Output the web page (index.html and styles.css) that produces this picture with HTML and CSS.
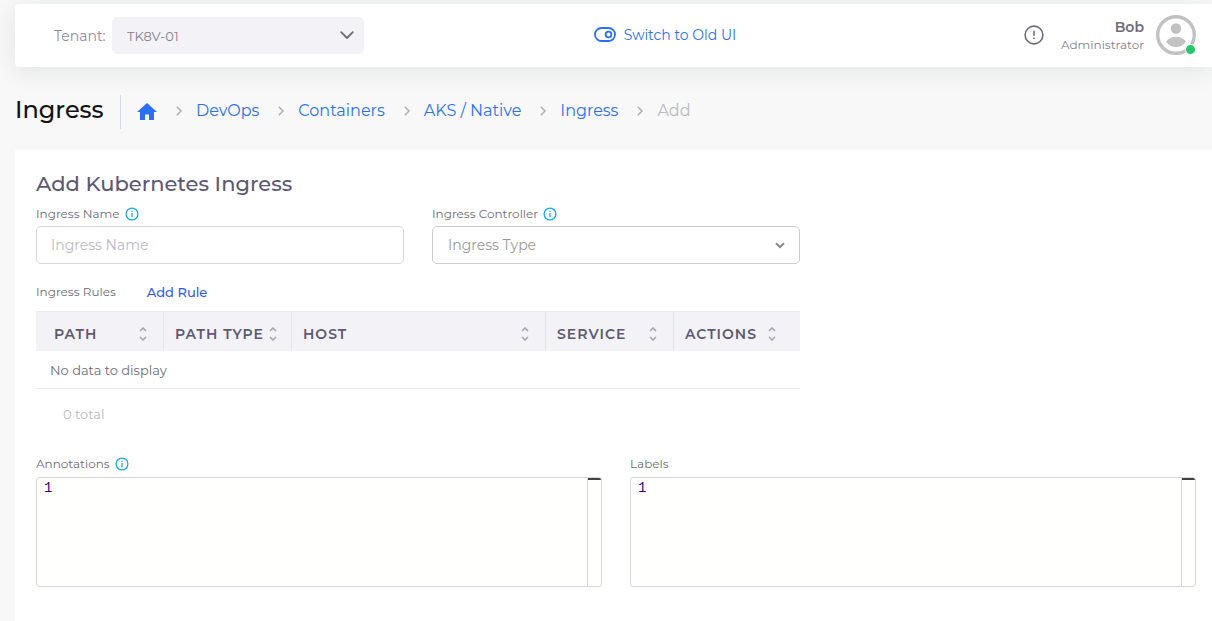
FILE: index.html
```html
<!DOCTYPE html>
<html lang="en">
<head>
<meta charset="utf-8">
<meta name="viewport" content="width=device-width, initial-scale=1">
<title>Add Kubernetes Ingress</title>
<link rel="stylesheet" href="styles.css">
</head>
<body>
<svg class="sprite" aria-hidden="true">
  <symbol id="info" viewBox="0 0 14 14"><circle cx="7" cy="7" r="5.9" fill="none" stroke="currentColor" stroke-width="1.3"/><path d="M7 6v4M7 3.8v1.3" fill="none" stroke="currentColor" stroke-width="1.3"/></symbol>
  <symbol id="sort" viewBox="0 0 8 14"><path d="M1 4l3-3 3 3M1 10l3 3 3-3" fill="none" stroke="currentColor" stroke-width="1.5"/></symbol>
  <symbol id="next" viewBox="0 0 6 10"><path d="M0.800 0.800L5 5 0.800 9.200" fill="none" stroke="currentColor" stroke-width="1.5"/></symbol>
</svg>

<header class="topbar">
  <div class="tenant">
    <label class="tenant-label" for="tenant">Tenant:</label>
    <div class="select-wrap tenant-wrap">
      <select id="tenant" class="tenant-select"><option>TK8V-01</option></select>
      <svg class="select-arrow" width="14" height="9" viewBox="0 0 14 9" aria-hidden="true"><path d="M1.2 1.2L7 7l5.800-5.800" fill="none" stroke="currentColor" stroke-width="1.8" stroke-linecap="round" stroke-linejoin="round"/></svg>
    </div>
  </div>
  <a class="switch" href="#">
    <svg width="22" height="15" viewBox="0 0 22 15" aria-hidden="true"><rect x="1" y="1" width="20" height="13" rx="6.500" fill="none" stroke="currentColor" stroke-width="1.8"/><circle cx="14.500" cy="7.500" r="2.900" fill="none" stroke="currentColor" stroke-width="1.800"/></svg>
    <span>Switch to Old UI</span>
  </a>
  <div class="account">
    <button class="icon-button" type="button" aria-label="Alerts">
      <svg width="20" height="20" viewBox="0 0 20 20" aria-hidden="true"><circle cx="10" cy="10" r="8.900" fill="none" stroke="currentColor" stroke-width="1.600"/><path d="M10 5.800v5M10 12.500v1.600" fill="none" stroke="currentColor" stroke-width="1.600"/></svg>
    </button>
    <div class="user">
      <span class="user-name">Bob</span>
      <span class="user-role">Administrator</span>
    </div>
    <div class="avatar">
      <svg width="40" height="40" viewBox="0 0 40 40" aria-hidden="true"><circle cx="20" cy="20" r="18.300" fill="#fff" stroke="#c1c1c1" stroke-width="3.400"/><circle cx="20" cy="13.500" r="5.200" fill="#c1c1c1"/><path d="M10 26.500Q14 21.800 20 21.800T30 26.500Q26 32.200 20 32.200T10 26.500Z" fill="#c1c1c1"/></svg>
      <span class="status"></span>
    </div>
  </div>
</header>

<div class="page-head">
  <h1 class="page-title">Ingress</h1>
  <nav class="crumbs" aria-label="Breadcrumb">
    <a class="home" href="#" aria-label="Home"><svg width="20" height="17" viewBox="0 0 20 17" aria-hidden="true"><path d="M10 0L0 9h3v8h5v-5.500h4V17h5V9h3z" fill="currentColor"/></svg></a>
    <svg class="sep" aria-hidden="true"><use href="#next"/></svg>
    <a href="#">DevOps</a>
    <svg class="sep" aria-hidden="true"><use href="#next"/></svg>
    <a href="#">Containers</a>
    <svg class="sep" aria-hidden="true"><use href="#next"/></svg>
    <a href="#">AKS / Native</a>
    <svg class="sep" aria-hidden="true"><use href="#next"/></svg>
    <a href="#">Ingress</a>
    <svg class="sep" aria-hidden="true"><use href="#next"/></svg>
    <span class="current">Add</span>
  </nav>
</div>

<main class="card">
  <h2 class="card-title">Add Kubernetes Ingress</h2>
  <form class="form">
    <div class="field">
      <div class="label-row"><label for="name">Ingress Name</label><svg class="info" aria-hidden="true"><use href="#info"/></svg></div>
      <input id="name" class="control" type="text" placeholder="Ingress Name">
    </div>
    <div class="field">
      <div class="label-row"><label for="controller">Ingress Controller</label><svg class="info" aria-hidden="true"><use href="#info"/></svg></div>
      <div class="select-wrap">
        <select id="controller" class="control control-select"><option>Ingress Type</option></select>
        <svg class="select-arrow arrow-small" width="10" height="7" viewBox="0 0 10 7" aria-hidden="true"><path d="M1 1.200l4 3.800 4-3.800" fill="none" stroke="currentColor" stroke-width="2"/></svg>
      </div>
    </div>

    <section class="rules">
      <div class="rules-head"><span id="rules-label" class="rules-label">Ingress Rules</span><button class="add-rule" type="button">Add Rule</button></div>
      <table class="table" aria-labelledby="rules-label">
        <colgroup><col class="col-edge"><col class="col-inner"><col><col class="col-inner"><col class="col-edge"></colgroup>
        <thead>
          <tr>
            <th><button class="sort" type="button">Path<svg aria-hidden="true"><use href="#sort"/></svg></button></th>
            <th><button class="sort" type="button">Path Type<svg aria-hidden="true"><use href="#sort"/></svg></button></th>
            <th><button class="sort" type="button">Host<svg aria-hidden="true"><use href="#sort"/></svg></button></th>
            <th><button class="sort" type="button">Service<svg aria-hidden="true"><use href="#sort"/></svg></button></th>
            <th><button class="sort" type="button">Actions<svg aria-hidden="true"><use href="#sort"/></svg></button></th>
          </tr>
        </thead>
        <tbody><tr><td colspan="5">No data to display</td></tr></tbody>
      </table>
      <div class="total">0 total</div>
    </section>

    <div class="field half">
      <div class="label-row"><label for="annotations">Annotations</label><svg class="info" aria-hidden="true"><use href="#info"/></svg></div>
      <div class="editor"><span class="line-no">1</span><textarea id="annotations" class="code" spellcheck="false"></textarea><span class="ruler"></span></div>
    </div>
    <div class="field half">
      <div class="label-row"><label for="labels">Labels</label></div>
      <div class="editor"><span class="line-no">1</span><textarea id="labels" class="code" spellcheck="false"></textarea><span class="ruler"></span></div>
    </div>
  </form>
</main>
</body>
</html>
```
FILE: styles.css
```css
* { box-sizing: border-box; }

body {
  margin: 0;
  padding: 4px 0 0 15px;
  min-height: 100vh;
  display: flex;
  flex-direction: column;
  background: #f8f8f8;
  color: #6e6b7b;
  font-family: Montserrat, Inter, "Open Sans", sans-serif;
  font-size: 13px;
  line-height: 16px;
}

button, input, select, textarea { font: inherit; color: inherit; margin: 0; }
button { padding: 0; border: 0; background: none; cursor: pointer; }
a { color: #2c6ff7; text-decoration: none; }
svg { display: block; flex: none; }
.sprite { position: absolute; width: 0; height: 0; }

/* Top bar */
.topbar {
  display: grid;
  grid-template-columns: 27fr auto 23fr;
  align-items: center;
  min-height: 63px;
  padding: 0 16px 0 39px;
  background: #fff;
  border-radius: 4px 0 0 4px;
  box-shadow: 0 4px 24px 0 rgba(34, 41, 47, 0.1);
}
.tenant { display: flex; align-items: center; gap: 4px; }
.tenant-label { min-width: 54px; font-size: 14px; color: #8f8d99; }
.tenant-wrap { flex: 0 1 252px; }
.select-wrap { position: relative; }
.select-wrap select { appearance: none; width: 100%; }
.select-arrow {
  position: absolute;
  right: 10px;
  top: 0;
  bottom: 0;
  margin: auto;
  pointer-events: none;
}
.tenant-select {
  height: 37px;
  padding: 0 32px 0 15px;
  border: 0;
  border-radius: 5px;
  background: #f3f2f7;
  color: #82808d;
}
.switch { display: flex; align-items: center; gap: 8px; padding-bottom: 2px; font-size: 14px; }
.account { display: flex; align-items: center; justify-content: flex-end; padding-bottom: 2px; }
.icon-button { margin-right: 17px; }
.user { display: flex; flex-direction: column; align-items: flex-end; margin-right: 12px; padding-top: 2px; }
.user-name { font-size: 14px; line-height: 18px; font-weight: 600; }
.user-role { font-size: 12px; line-height: 17px; color: #82808d; }
.avatar { position: relative; }
.status {
  position: absolute;
  right: 0;
  bottom: 0;
  width: 11px;
  height: 11px;
  border: 1px solid #fff;
  border-radius: 50%;
  background: #28c76f;
}

/* Title and breadcrumb */
.page-head { display: flex; align-items: center; padding: 28px 0 21px; }
.page-title {
  margin: 0;
  padding-bottom: 4px;
  min-width: 91px;
  color: #121212;
  font-size: 24px;
  line-height: 30px;
  font-weight: 500;
}
.crumbs {
  display: flex;
  align-items: center;
  gap: 14px;
  height: 34px;
  margin-left: 14px;
  padding: 0 0 2px 16px;
  border-left: 1px solid #d6dce1;
  font-size: 16px;
}
.sep { width: 6px; height: 10px; margin-left: 5px; color: #b0aeb8; }
.current { color: #b9b9c3; }

/* Form card */
.card { flex: 1; padding: 19px 16px 34px 21px; background: #fff; }
.card-title {
  margin: 0 0 8px;
  color: #5e5873;
  font-size: 21px;
  line-height: 29px;
  font-weight: 500;
}
.form {
  display: grid;
  grid-template-columns: repeat(6, minmax(0, 1fr));
  column-gap: 28px;
}
.field { grid-column: span 2; }
.half { grid-column: span 3; }
.label-row {
  display: flex;
  align-items: center;
  gap: 5px;
  height: 16px;
  margin-bottom: 4px;
  font-size: 12px;
}
.info { width: 14px; height: 14px; color: #14aaf0; }
.control {
  display: block;
  width: 100%;
  height: 38px;
  padding: 0 14px;
  border: 1px solid #d8d6de;
  border-radius: 5px;
  background: #fff;
  font-size: 14px;
}
.control::placeholder { color: #b9b9c3; opacity: 1; }
.control-select { border-color: #ccc; padding: 0 15px; color: #999; }
.arrow-small { right: 15px; color: #8a8a8a; }

/* Rules table */
.rules { grid-column: 1 / span 4; padding-top: 20px; }
.rules-head { display: flex; gap: 31px; margin-bottom: 11px; }
.rules-label { font-size: 12px; }
.add-rule { color: #2f5bf5; font-weight: 500; }
.table { width: 100%; table-layout: fixed; border-collapse: separate; border-spacing: 0; }
.col-edge { width: 127px; }
.col-inner { width: 128px; }
.table th {
  height: 40px;
  padding: 5px 16px 0 11px;
  border-top: 1px solid #ebe9f1;
  border-left: 1px solid #e6e4ee;
  background: #f3f2f7;
}
.table th:first-child { padding-left: 17px; border-left-color: #f3f2f7; }
.table th:nth-child(2) { padding-right: 14px; }
.table th:last-child { padding-right: 24px; }
.sort {
  display: flex;
  align-items: center;
  justify-content: space-between;
  width: 100%;
  color: #5e5873;
  font-size: 14px;
  font-weight: 600;
  letter-spacing: 1px;
  text-transform: uppercase;
  white-space: nowrap;
}
.sort svg { width: 8px; height: 14px; color: #a5a2b2; }
.table td { height: 38px; padding: 0 14px; border-bottom: 1px solid #ebe9f1; }
.total { padding: 17px 27px 34px; color: #b9b9c3; }

/* Code editors */
.editor {
  display: flex;
  height: 110px;
  margin-top: 5px;
  border: 1px solid #d8d6de;
  border-radius: 3px;
  background: #fffffe;
  overflow: hidden;
}
.line-no {
  padding: 2px 7px;
  color: #2b0a78;
  font-family: "Liberation Mono", monospace;
  font-size: 14px;
  line-height: 16px;
}
.code {
  flex: 1;
  min-width: 0;
  padding: 2px 4px;
  border: 0;
  outline: 0;
  resize: none;
  background: transparent;
  font-family: "Liberation Mono", monospace;
  font-size: 14px;
}
.ruler { width: 14px; border-left: 1px solid #d8d8d8; background: linear-gradient(#424242 2px, transparent 2px); }
```
